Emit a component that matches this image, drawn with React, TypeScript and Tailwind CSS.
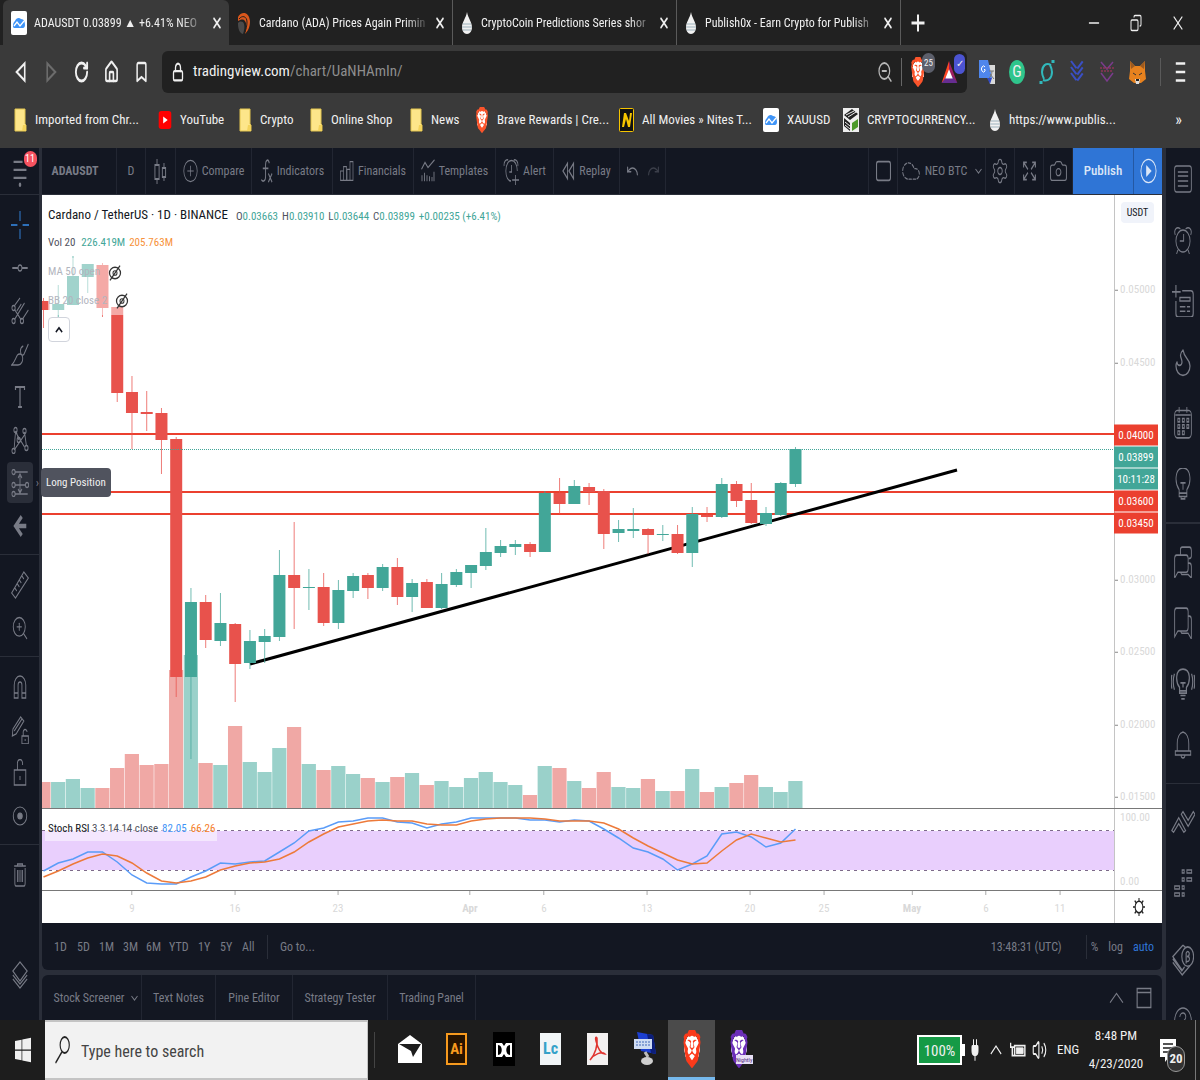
import type { CSSProperties, ReactNode } from "react";
import {
  Bell,
  BookmarkIcon,
  Camera,
  Cloud,
  Copy,
  Flame,
  House,
  Lock,
  LockOpen,
  Minus,
  Plug,
  Redo,
  RotateCw,
  Settings,
  Undo,
  Volume2,
  X,
  ZoomIn,
  ZoomOut,
} from "lucide-react";
import { SiBrave } from "react-icons/si";
import { FaWindows } from "react-icons/fa";

type Candle = [up: 0 | 1, high: number, top: number, bottom: number, low: number, volume: number];

const FIRST_X = 43.5;
const STEP = 14.745;

const candles: Candle[] = [
  [0, 298, 301, 310, 328, 782], [1, 285, 304, 310, 320, 782], [1, 256, 276, 305, 305, 779],
  [1, 264, 264, 277, 293, 788], [0, 263, 265, 308, 317, 788], [0, 307, 307, 393, 402, 768],
  [0, 376, 392, 413, 449, 754], [0, 391, 412, 414, 431, 765], [0, 408, 413, 440, 474, 764],
  [0, 437, 439, 677, 697, 670], [1, 588, 602, 677, 759, 655], [0, 595, 602, 640, 648, 763],
  [1, 593, 623, 641, 646, 765], [0, 623, 624, 664, 702, 726], [1, 630, 641, 663, 669, 762],
  [1, 629, 636, 642, 663, 772], [1, 550, 575, 637, 641, 748], [0, 522, 575, 588, 629, 727],
  [1, 569, 587, 588, 610, 764], [0, 573, 587, 623, 626, 770], [1, 580, 590, 623, 629, 766],
  [1, 573, 576, 591, 598, 774], [0, 573, 575, 588, 599, 778], [1, 564, 567, 588, 591, 782],
  [0, 558, 567, 597, 605, 777], [1, 579, 583, 597, 612, 773], [0, 579, 582, 608, 608, 785],
  [1, 573, 584, 608, 609, 781], [1, 569, 572, 585, 587, 787], [1, 565, 565, 573, 588, 778],
  [1, 528, 552, 566, 570, 772], [1, 540, 546, 553, 557, 782], [1, 540, 544, 547, 555, 785],
  [0, 542, 544, 552, 557, 795], [1, 491, 493, 552, 552, 766], [0, 478, 493, 504, 514, 768],
  [1, 480, 486, 504, 504, 781], [0, 483, 487, 492, 505, 788], [0, 489, 491, 534, 549, 772],
  [1, 520, 529, 533, 542, 787], [1, 508, 529, 531, 538, 788], [0, 528, 529, 535, 554, 779],
  [1, 525, 534, 535, 541, 791], [0, 525, 534, 553, 554, 791], [1, 507, 514, 553, 567, 769],
  [0, 507, 515, 517, 522, 792], [1, 478, 484, 517, 518, 787], [0, 481, 484, 501, 507, 783],
  [0, 483, 500, 523, 524, 775], [1, 507, 513, 524, 526, 787], [1, 482, 483, 515, 516, 792],
  [1, 447, 449, 484, 487, 781],
];

const stochK = [
  871, 863, 859, 852, 852, 862, 875, 883, 884, 884, 877, 871, 863, 864, 862, 861, 852, 843, 831, 828, 822, 821, 818,
  818, 822, 823, 828, 824, 822, 818, 818, 818, 818, 820, 820, 822, 820, 821, 829, 838, 848, 852, 859, 870, 864, 856,
  834, 832, 837, 847, 843, 829,
];
const stochD = [
  877, 871, 864, 858, 854, 856, 863, 873, 881, 883, 881, 877, 870, 866, 863, 862, 859, 852, 842, 834, 827, 824, 821,
  820, 821, 821, 824, 825, 825, 821, 819, 818, 818, 818, 819, 821, 821, 821, 823, 829, 838, 846, 853, 860, 864, 863,
  851, 840, 834, 838, 842, 840,
];

const toPoints = (ys: number[]) => ys.map((y, i) => `${FIRST_X + i * STEP},${y}`).join(" ");
const priceTop = (y: number): CSSProperties => ({ top: `${((y - 195) / 613) * 100}%` });
const timeLeft = (x: number): CSSProperties => ({ left: `${((x - 42) / 1072) * 100}%` });

const squash = { preserveAspectRatio: "none", strokeWidth: 1.2 } as const;

/* ---------- shared bits ---------- */

function Glyph({ children, className = "w-[18px] h-7" }: { children: ReactNode; className?: string }) {
  return (
    <svg
      viewBox="0 0 28 28"
      preserveAspectRatio="none"
      fill="none"
      stroke="currentColor"
      strokeWidth={1.4}
      className={`${className} shrink-0`}
      aria-hidden="true"
    >
      {children}
    </svg>
  );
}

function BraveIcon({ className }: { className: string }) {
  return (
    <span className="inline-flex shrink-0 bg-[radial-gradient(closest-side,white_75%,transparent_78%)]">
      <SiBrave preserveAspectRatio="none" className={className} aria-hidden="true" />
    </span>
  );
}

function TvIcon() {
  return (
    <svg viewBox="0 0 16 24" className="h-6 w-4 shrink-0" aria-hidden="true">
      <rect width="16" height="24" rx="2" fill="#fff" />
      <path d="M2 15c0-3 1-4 2-5 1-3 4-4 6-2 3 0 4 3 4 6 0 2-1 3-2 3H4c-1 0-2 0-2-2z" fill="#3f94f7" />
      <path d="M3 15l3-4 3 4 4-5" fill="none" stroke="#fff" strokeWidth="1.3" />
    </svg>
  );
}

function DropIcon() {
  return (
    <svg viewBox="0 0 12 24" className="h-6 w-3 shrink-0" aria-hidden="true">
      <path d="M6 1c1 6 5 10 5 15 0 4-2 7-5 7s-5-3-5-7C1 11 5 7 6 1z" fill="#f1f1f1" />
      <path d="M2 13h8M1 16h10M2 19h8" stroke="#9db2bd" />
    </svg>
  );
}

function FolderIcon() {
  return (
    <svg viewBox="0 0 13 24" className="h-6 w-[13px] shrink-0" aria-hidden="true">
      <path d="M1 1h10v15l1 1v6H1z" fill="#fde68a" stroke="#e2c44f" />
      <path d="M9 17h3v6H8z" fill="#f3d35b" />
    </svg>
  );
}

/* ---------- browser ---------- */

const tabs = [
  {
    title: "Cardano (ADA) Prices Again Primin",
    icon: (
      <svg viewBox="0 0 14 24" className="h-6 w-3.5 shrink-0" aria-hidden="true">
        <path d="M1 6c3-6 11-6 12 4 0 6-2 10-5 13 2-6 2-12-1-14-2-1-4 0-6 1z" fill="#d9571c" />
        <path d="M1 12c2-2 5-2 6 1s0 7-1 10c-4-1-5-6-5-11z" fill="#4a4a4a" />
        <path d="M2 8c3-4 8-3 8 3 0 4-1 7-2 10" fill="none" stroke="#212121" />
      </svg>
    ),
  },
  { title: "CryptoCoin Predictions Series shor", icon: <DropIcon /> },
  { title: "Publish0x - Earn Crypto for Publish", icon: <DropIcon /> },
];

function TabStrip() {
  return (
    <div className="flex h-[45px] shrink-0 items-stretch bg-[#212121] pl-[3px] text-[12px] text-[#f0f0f0]">
      <div className="flex w-[226px] items-center rounded-t-md bg-[#3a3a3a] pr-1.5 pl-2">
        <TvIcon />
        <span className="ml-[7px] flex-1 whitespace-nowrap [mask-image:linear-gradient(to_right,black_86%,transparent)]">
          ADAUSDT 0.03899 ▲ +6.41% NEO
        </span>
        <button aria-label="Close tab" className="ml-1.5">
          <X {...squash} strokeWidth={3} className="h-[18px] w-3" />
        </button>
      </div>
      {tabs.map((tab) => (
        <div key={tab.title} className="flex w-[224px] items-center border-r border-[#5a5a5a] pr-1.5 pl-2">
          {tab.icon}
          <span className="ml-2 flex-1 whitespace-nowrap [mask-image:linear-gradient(to_right,black_86%,transparent)]">
            {tab.title}
          </span>
          <button aria-label="Close tab" className="ml-1">
            <X {...squash} strokeWidth={3} className="h-[18px] w-3" />
          </button>
        </div>
      ))}
      <button aria-label="New tab" className="ml-2.5">
        <Glyph className="h-5 w-3.5">
          <path d="M14 2v24M1 14h26" strokeWidth={4} />
        </Glyph>
      </button>
      <div className="ml-auto flex items-center gap-7 pr-3.5">
        <button aria-label="Minimize">
          <Minus {...squash} strokeWidth={1.5} className="h-6 w-4" />
        </button>
        <button aria-label="Restore">
          <Copy {...squash} strokeWidth={2} className="h-[18px] w-3 -scale-x-100" />
        </button>
        <button aria-label="Close window">
          <X {...squash} strokeWidth={1.5} className="h-6 w-4" />
        </button>
      </div>
    </div>
  );
}

function AddressBar() {
  return (
    <div className="flex h-[53px] shrink-0 items-center bg-[#3a3a3a] text-[#f0f0f0]">
      <div className="flex w-[162px] items-center gap-[15px] pl-3.5">
        <button aria-label="Back">
          <Glyph className="h-6 w-[15px]">
            <path d="M20 4v20L5 14z" strokeWidth={3} />
          </Glyph>
        </button>
        <button aria-label="Forward" className="text-[#6c6c6c]">
          <Glyph className="h-6 w-[15px]">
            <path d="M6 4v20l15-10z" strokeWidth={3} />
          </Glyph>
        </button>
        <button aria-label="Reload">
          <RotateCw {...squash} strokeWidth={3} className="h-6 w-[15px]" />
        </button>
        <button aria-label="Home">
          <House {...squash} strokeWidth={2.6} className="h-6 w-[15px]" />
        </button>
        <button aria-label="Bookmark this page">
          <BookmarkIcon {...squash} strokeWidth={2.4} className="h-6 w-[15px]" />
        </button>
      </div>
      <div className="flex h-[42px] flex-1 items-center rounded-md bg-[#212121] pr-0.5 pl-2.5">
        <Lock {...squash} strokeWidth={2.6} className="h-5 w-3" aria-hidden="true" />
        <p className="ml-[9px] flex-1 text-[15px]">
          tradingview.com<span className="text-[#8e8e8e]">/chart/UaNHAmIn/</span>
        </p>
        <button aria-label="Zoom" className="text-[#b8b8b8]">
          <ZoomOut {...squash} strokeWidth={1.8} className="h-6 w-4" />
        </button>
        <span className="mx-2 h-7 w-px bg-[#666]" />
        <button aria-label="Brave Shields" className="relative flex w-[31px] items-center">
          <BraveIcon className="h-[30px] w-4 text-[#fb542b]" />
          <span className="absolute -top-1 left-3 rounded-full bg-[#5c5f6b] px-0.5 text-[9px] leading-[20px]">25</span>
        </button>
        <button aria-label="Brave Rewards" className="relative w-6">
          <svg viewBox="0 0 17 26" className="h-6 w-[17px]" aria-hidden="true">
            <path d="M8 1L0 25l8-7z" fill="#ff4724" />
            <path d="M8 1l9 24-9-10z" fill="#9e1f63" />
            <path d="M0 25h17l-5-7H5z" fill="#662d91" />
            <path d="M8 10l4 10H4z" fill="#fff" />
          </svg>
          <span className="absolute -top-1.5 right-0 w-[11px] rounded-full bg-[#4c54d2] text-[10px] leading-[20px]">✓</span>
        </button>
      </div>
      <div className="flex w-[233px] items-center gap-[14px] pl-3">
        <svg viewBox="0 0 16 26" className="h-[26px] w-4" aria-hidden="true">
          <path d="M6 6h10v19h-5z" fill="#d9d9d9" />
          <path d="M0 1h9l4 18H0z" fill="#4f86ec" />
          <path d="M8 19h5l-2 6z" fill="#3049c4" />
          <path d="M6 8a2 3 0 100 4V10.500H5" stroke="#fff" fill="none" />
          <path d="M10 12h5m-2 0c0 4-2 6-3 7m1-4l4 5" stroke="#777" fill="none" />
        </svg>
        <span className="flex h-6 w-4 items-center justify-center rounded-[50%] bg-[#2fc58c] text-[16px]">G</span>
        <svg viewBox="0 0 16 26" className="h-[26px] w-4" fill="none" stroke="#31b8bb" strokeWidth="2" aria-hidden="true">
          <path d="M12 6C7 3 3 7 3 13c0 3 1 5 2 7M4 21c5 2 9-2 9-8 0-3-1-5-2-7" />
          <path d="M14 1v3M2 22v3" strokeWidth="3" />
        </svg>
        <svg viewBox="0 0 16 26" className="h-[26px] w-4" fill="none" stroke="#3a4fc4" strokeWidth="2" aria-hidden="true">
          <path d="M2 2l6 8 6-8M2 8l6 8 6-8M2 14l6 8 6-8" strokeDasharray="9 1.500" />
        </svg>
        <svg viewBox="0 0 16 26" className="h-[26px] w-4" fill="none" stroke="#7a3c8c" strokeWidth="1.500" aria-hidden="true">
          <path d="M2 3l6 7 6-7M2 14l6 8 6-8" />
          <path d="M1 9h14M2 12h12" stroke="#8f3557" strokeDasharray="2 1" />
        </svg>
        <svg viewBox="0 0 17 26" className="h-[26px] w-[17px]" aria-hidden="true">
          <path d="M1 2l5 5h5l5-5v10l1 8-5 4H5l-5-4 1-8z" fill="#e8821e" />
          <path d="M1 2l5 5-4 3zM16 2l-5 5 4 3z" fill="#9c5a20" />
          <path d="M4 14l3 2M13 14l-3 2" stroke="#333" />
          <path d="M6 20h5l-1 5H7z" fill="#ddd" />
          <path d="M7 20h3v2H7z" fill="#222" />
        </svg>
        <span className="h-7 w-px bg-[#5a5a5a]" />
        <button aria-label="Menu">
          <Glyph className="h-6 w-[11px]">
            <path d="M2 4h24M2 14h24M2 24h24" strokeWidth={3} />
          </Glyph>
        </button>
      </div>
    </div>
  );
}

function Bookmark({ icon, label, width }: { icon: ReactNode; label: string; width: string }) {
  return (
    <a href="#" className={`flex shrink-0 items-center gap-2 whitespace-nowrap ${width}`}>
      {icon}
      {label}
    </a>
  );
}

function BookmarksBar() {
  return (
    <nav
      aria-label="Bookmarks"
      className="flex h-[50px] shrink-0 items-center overflow-hidden bg-[#3a3a3a] pr-[18px] pb-1.5 pl-3.5 text-[13px] text-[#f0f0f0]"
    >
      <Bookmark icon={<FolderIcon />} label="Imported from Chr..." width="w-36" />
      <Bookmark
        icon={
          <svg viewBox="0 0 14 20" className="h-[18px] w-3.5 shrink-0" aria-hidden="true">
            <rect width="14" height="20" rx="3" fill="#f00" />
            <path d="M5 6l5 4-5 4z" fill="#fff" />
          </svg>
        }
        label="YouTube"
        width="w-[81px]"
      />
      <Bookmark icon={<FolderIcon />} label="Crypto" width="w-[71px]" />
      <Bookmark icon={<FolderIcon />} label="Online Shop" width="w-[100px]" />
      <Bookmark icon={<FolderIcon />} label="News" width="w-[65px]" />
      <Bookmark icon={<BraveIcon className="h-[26px] w-3.5 text-[#fb542b]" />} label="Brave Rewards | Cre..." width="w-36" />
      <Bookmark
        icon={
          <svg viewBox="0 0 15 24" className="h-6 w-[15px] shrink-0" aria-hidden="true">
            <rect x="0.500" y="0.500" width="14" height="23" rx="1" fill="#111" stroke="#f5c400" />
            <path d="M3 19L5 5h2l3 8 1-8h2l-2 14H9L7 11 5 19z" fill="#f5c400" />
          </svg>
        }
        label="All Movies » Nites T..."
        width="w-36"
      />
      <Bookmark icon={<TvIcon />} label="XAUUSD" width="w-20" />
      <Bookmark
        icon={
          <svg viewBox="0 0 16 24" className="h-6 w-4 shrink-0" aria-hidden="true">
            <rect width="16" height="24" fill="#eee" />
            <path d="M1 7l8-6 6 5-8 6zM1 10l6 5v8l-6-5z" fill="#222" />
            <path d="M9 15l6-4v8l-6 4z" fill="#4c9a2a" />
            <path d="M3 7l8-4M5 9l8-5M2 14l5 4M2 17l5 4" stroke="#eee" />
          </svg>
        }
        label="CRYPTOCURRENCY..."
        width="w-[146px]"
      />
      <Bookmark icon={<DropIcon />} label="https://www.publis..." width="w-36" />
      <button aria-label="More bookmarks" className="ml-auto text-[16px]">
        »
      </button>
    </nav>
  );
}

/* ---------- TradingView: tool rails ---------- */

const drawTools: { name: string; art: ReactNode }[] = [
  { name: "Cross", art: <path d="M14 0v10M14 18v10M0 14h10M18 14h10" stroke="#2d6fb8" strokeWidth={1.8} /> },
  {
    name: "Trend line",
    art: (
      <>
        <path d="M2 14h9M17 14h9" strokeWidth={1.8} />
        <circle cx="14" cy="14" r="3" />
      </>
    ),
  },
  {
    name: "Pitchfork",
    art: (
      <>
        <path d="M5 9L14 1M6 13l10 10M6 22L21 6M18 22l9-9M9 14l7-7" />
        <circle cx="4" cy="11" r="2.500" />
        <circle cx="4" cy="24" r="2.500" />
        <circle cx="17" cy="24" r="2.500" />
      </>
    ),
  },
  { name: "Brush", art: <path d="M1 25h10c5 0 8-4 7-8-1-3-5-4-8-2-3 3-4 7-9 10zM15 12c0 4 5 4 6 1l6-9M15 12c-1-3 1-5 4-6" /> },
  { name: "Text", art: <path d="M7 7V4h14v3M14 4v20M11 24h6" strokeWidth={1.8} /> },
  {
    name: "Pattern",
    art: (
      <>
        <path d="M5 22L7 6l14 15M5 24l17-16M21 6l3 14M8 5l4 9" />
        <circle cx="7" cy="4" r="2.500" />
        <circle cx="21" cy="5" r="2.500" />
        <circle cx="4" cy="25" r="2.500" />
        <circle cx="24" cy="22" r="2.500" />
        <circle cx="12" cy="14" r="2.500" />
      </>
    ),
  },
  {
    name: "Long Position",
    art: (
      <>
        <path d="M6 3h20M6 25h20M6 16h17M14 7v16M11 9l3-4 3 4M11 20l3 4 3-4" />
        <circle cx="4" cy="3" r="2.500" />
        <circle cx="4" cy="16" r="2.500" />
        <circle cx="4" cy="25" r="2.500" />
        <circle cx="25" cy="16" r="2.500" />
      </>
    ),
  },
  { name: "Back", art: <path d="M25 14H7M17 3L6 14l11 11" strokeWidth={5} /> },
];

function ToolButton({ name, children }: { name: string; children: ReactNode }) {
  return (
    <button aria-label={name} className="flex h-[43px] w-full items-center justify-center">
      {children}
    </button>
  );
}

function LeftRail() {
  return (
    <aside className="flex w-10 shrink-0 flex-col border-r border-[#2a2e39] bg-[#131722] text-[#787b86]">
      <div className="flex h-[47px] shrink-0 items-center justify-center border-b border-[#2a2e39]">
        <button aria-label="Menu, 11 notifications" className="relative">
          <Glyph className="h-8 w-[18px]">
            <path d="M4 6h14M4 13h20M4 20h20" strokeWidth={2} />
            <circle cx="14" cy="26" r="2" fill="currentColor" stroke="none" />
          </Glyph>
          <span className="absolute -top-1 -right-2 w-[13px] rounded-full bg-[#f7525f] text-center text-[10px] leading-[16px] text-white">
            11
          </span>
        </button>
      </div>
      <div className="border-b border-[#2a2e39] pt-2 pb-[7px]">
        {drawTools.map((tool) =>
          tool.name === "Long Position" ? (
            <div key={tool.name} className="relative flex h-[43px] items-center justify-center">
              <button aria-label={tool.name} className="flex h-[41px] w-[26px] items-center justify-center rounded bg-[#2a2e39]">
                <Glyph>{tool.art}</Glyph>
              </button>
              <span className="absolute right-0 text-[12px]">›</span>
              <span
                role="tooltip"
                className="absolute left-[41px] z-10 rounded-sm bg-[#50535e] px-[5px] text-[11px] leading-[29px] whitespace-nowrap text-[#f0f0f0]"
              >
                Long Position
              </span>
            </div>
          ) : (
            <ToolButton key={tool.name} name={tool.name}>
              <Glyph className={tool.name === "Back" ? "w-4 h-6" : "w-[18px] h-7"}>{tool.art}</Glyph>
            </ToolButton>
          ),
        )}
      </div>
      <div className="border-b border-[#2a2e39] pt-2 pb-[7px]">
        <ToolButton name="Measure">
          <Glyph>
            <path d="M1 22L20 1l7 6L7 27zM6 17l3 3M10 13l3 3M13 9l3 3M17 5l3 3" />
          </Glyph>
        </ToolButton>
        <ToolButton name="Zoom in">
          <ZoomIn {...squash} className="h-7 w-[18px]" />
        </ToolButton>
      </div>
      <div className="border-b border-[#2a2e39] pt-2 pb-[7px]">
        <ToolButton name="Magnet">
          <Glyph>
            <path d="M5 25V12a9 9 0 0118 0v13h-6V12a3 3 0 00-6 0v13zM5 20h6M17 20h6" />
          </Glyph>
        </ToolButton>
        <ToolButton name="Stay in drawing mode">
          <Glyph>
            <path d="M2 20l1-7L15 1l5 4L8 18zM5 15L17 3M17 20h10v8H17zM19 20v-3a3 3 0 016-1M22 23v2" />
          </Glyph>
        </ToolButton>
        <ToolButton name="Lock all drawings">
          <Glyph>
            <path d="M5 11h18v15H5zM10 11V5a4 4 0 018-1v2M14 17v4" />
          </Glyph>
        </ToolButton>
        <ToolButton name="Hide all drawings">
          <Glyph className="h-6 w-[18px]">
            <circle cx="14" cy="14" r="10.500" />
            <circle cx="14" cy="14" r="3.500" fill="currentColor" />
          </Glyph>
        </ToolButton>
      </div>
      <div className="pt-2">
        <ToolButton name="Remove drawings">
          <Glyph>
            <path d="M5 5h18M10 5V3h8v2M6 7v15c0 3 1 3 3 3h10c2 0 3 0 3-3V7M10 9v12M12.500 9v12M15.500 9v12M18 9v12" />
          </Glyph>
        </ToolButton>
      </div>
      <div className="mt-auto pb-6">
        <ToolButton name="Object tree">
          <Glyph className="h-7 w-5">
            <path d="M14 1l10 9-10 10L4 10zM4 14l10 9 10-9M4 18l10 9 10-9" />
          </Glyph>
        </ToolButton>
      </div>
    </aside>
  );
}

function SideButton({ name, children }: { name: string; children: ReactNode }) {
  return (
    <button aria-label={name} className="flex h-[61px] w-full shrink-0 items-center justify-center">
      {children}
    </button>
  );
}

function RightRail() {
  return (
    <aside className="flex w-[34px] shrink-0 flex-col overflow-hidden bg-[#131722] text-[#787b86]">
      <div className="border-b-2 border-[#2a2e39] pb-2">
        <SideButton name="Watchlist">
          <Glyph>
            <rect x="1" y="1" width="26" height="26" rx="3" />
            <path d="M6 7h16M6 11h16M6 16h16M6 21h16" />
          </Glyph>
        </SideButton>
        <SideButton name="Alerts">
          <Glyph>
            <path d="M14 4a11 11 0 100 22 11 11 0 000-22zM15 8v7H9M2 9c-3-6 3-9 8-6M26 9c3-6-3-9-8-6M6 24l-2 4M22 24l2 4" />
          </Glyph>
        </SideButton>
        <SideButton name="Data window">
          <Glyph className="h-8 w-[22px]">
            <path d="M13 5h11q3 0 3 3v17q0 3-3 3H8q-3 0-3-3V14M5 0v11M0 6h11M10 11h13v3H10zM10 19h7M19 19h4M10 23h7M19 23h4" />
          </Glyph>
        </SideButton>
        <SideButton name="Hotlists">
          <Flame {...squash} className="h-8 w-6" />
        </SideButton>
        <SideButton name="Calendar">
          <Glyph className="h-8 w-[18px]">
            <rect x="1" y="3" width="26" height="24" rx="4" />
            <path d="M8 0v5M20 0v5M2 7h24" />
            <path d="M6 10h3v3H6zM13 10h3v3h-3zM20 10h3v3h-3zM6 15.500h3v3H6zM13 15.500h3v3h-3zM20 15.500h3v3h-3zM6 21h3v3H6zM13 21h3v3h-3z" />
          </Glyph>
        </SideButton>
        <SideButton name="My ideas">
          <Glyph className="h-8 w-[18px]">
            <path d="M14 0C2 0 0 12 8 19v3h12v-3c8-7 6-19-6-19zM8 22v3h12v-3M11 25v2h6v-2M14 19v-6M10 13h8" />
          </Glyph>
        </SideButton>
      </div>
      <div className="border-b border-[#2a2e39] pt-[7px] pb-2">
        <SideButton name="Public chats">
          <Glyph className="h-8 w-[18px]">
            <path d="M1 28V11q0-3 3-3h15q3 0 3 3v9q0 3-3 3H6zM10 8V3q0-2 3-2h11q3 0 3 3v5q0 2-4 2M22 15h2q3 0 3 3v10l-5-3H12l-2-2" />
          </Glyph>
        </SideButton>
        <SideButton name="Private chats">
          <Glyph className="h-8 w-[18px]">
            <path d="M1 26V4q0-3 3-3h15q3 0 3 3v14q0 3-3 3H6zM22 8h2q3 0 3 3v17l-5-5H12l-2-2" />
          </Glyph>
        </SideButton>
        <SideButton name="Ideas stream">
          <Glyph className="h-8 w-6">
            <path d="M14 1c-9 0-9 11-4 16v5h8v-5c5-5 5-16-4-16zM10 20h8M11 24h6M12 27h4M14 17v-4M11 13h6M4 5c-2 5-2 9 0 14M24 5c2 5 2 9 0 14M1 6c-1 4-1 8 0 12M27 6c1 4 1 8 0 12" />
          </Glyph>
        </SideButton>
        <SideButton name="Notifications">
          <Glyph>
            <path d="M14 1c-6 1-9 6-9 12v7h18v-7c0-6-3-11-9-12zM2 20h24v4H2zM11 24c0 4 6 4 6 0" />
          </Glyph>
        </SideButton>
      </div>
      <div className="pt-[7px]">
        <SideButton name="Order panel">
          <Glyph className="h-6 w-6">
            <path d="M1 24L9 9l8 15-2 2-6-10-6 10zM12 5l2-3 6 10 6-10 2 3-8 14z" />
          </Glyph>
        </SideButton>
        <SideButton name="Depth of market">
          <Glyph className="h-7 w-[19px]">
            <path d="M1 17h7v3H1zM1 24h7v3H1zM12 17h3v3h-3zM12 24h3v3h-3zM12 9h3v3h-3zM12 1h3v3h-3zM19 1h7v3h-7zM19 9h7v3h-7z" />
          </Glyph>
        </SideButton>
      </div>
      <div className="pt-4">
        <SideButton name="Object tree beta">
          <Glyph className="h-8 w-[22px]">
            <path d="M14 1L1 11l12 12 3-3M14 1l3 2M1 16l12 11 10-8M1 13l12 11" />
            <ellipse cx="20" cy="11" rx="7.500" ry="8.500" />
            <path d="M18 17V8q2-3 4 0 0 3-3 3 4 0 3 3-1 2-4 1" />
          </Glyph>
        </SideButton>
        <SideButton name="Help">
          <Glyph>
            <circle cx="14" cy="14" r="13" />
            <path d="M9 10c1-6 11-5 9 1-1 2-4 3-4 6" />
          </Glyph>
        </SideButton>
      </div>
    </aside>
  );
}

/* ---------- TradingView: top toolbar ---------- */

function BarItem({ width, label, children }: { width: string; label: string; children: ReactNode }) {
  return (
    <button
      aria-label={label}
      className={`flex shrink-0 items-center justify-center gap-1 border-r border-[#222632] whitespace-nowrap ${width}`}
    >
      {children}
    </button>
  );
}

function ChartToolbar() {
  return (
    <div className="flex h-[47px] shrink-0 border-b border-[#2a2e39] bg-[#131722] text-[12px] text-[#787b86]">
      <BarItem width="w-[75px] pr-2" label="Symbol">
        <span className="font-bold">ADAUSDT</span>
      </BarItem>
      <BarItem width="w-[29px]" label="Interval">
        D
      </BarItem>
      <BarItem width="w-[30px]" label="Bar style">
        <Glyph className="h-7 w-[13px]">
          <path d="M2 8h9v14H2zM6.500 2v6M6.500 22v5M18 11h7v9h-7zM21.500 6v5M21.500 20v4" strokeWidth={2} />
        </Glyph>
      </BarItem>
      <BarItem width="w-[76px]" label="Compare">
        <Glyph className="h-6 w-[15px]">
          <circle cx="14" cy="14" r="12.500" />
          <path d="M14 8v12M8 14h12" />
        </Glyph>
        Compare
      </BarItem>
      <BarItem width="w-[81px]" label="Indicators">
        <Glyph className="h-6 w-[13px]">
          <path d="M20 5c-2-6-8-4-8 2v13c0 6-6 7-9 4M6 11h12M18 17l8 10M26 17l-8 10" strokeWidth={2} />
        </Glyph>
        Indicators
      </BarItem>
      <BarItem width="w-[81px]" label="Financials">
        <Glyph className="h-6 w-3.5">
          <path d="M1 14h6v11H1zM7 9h6v16H7zM14 12h6v13h-6zM20 3h6v22h-6z" />
        </Glyph>
        Financials
      </BarItem>
      <BarItem width="w-[82px]" label="Templates">
        <Glyph className="h-6 w-3.5">
          <path d="M1 12l7-8 6 6L27 1M2 26v-7M7 26V16M12 26v-7M17 26v-6M22 26v-5M26 26V15" strokeWidth={1.8} />
        </Glyph>
        Templates
      </BarItem>
      <BarItem width="w-[58px]" label="Alert">
        <Glyph className="h-7 w-4">
          <path d="M25 14c0-14-20-14-20 0 0 6 4 10 9 10M15 8v7h-4M2 9c-1-4 3-7 7-6M26 9c1-4-3-7-7-6M22 18v10M16 23h12" />
        </Glyph>
        Alert
      </BarItem>
      <BarItem width="w-[66px]" label="Replay">
        <Glyph className="h-6 w-[13px]">
          <path d="M12 5v18L2 14zM25 5v18l-10-9z" strokeWidth={2} />
        </Glyph>
        Replay
      </BarItem>
      <BarItem width="w-[46px]" label="Undo or redo">
        <Undo {...squash} strokeWidth={2} className="h-[18px] w-[13px]" />
        <Redo {...squash} strokeWidth={2} className="ml-1 h-[18px] w-[13px] opacity-40" />
      </BarItem>
      <div className="ml-auto flex">
        <BarItem width="w-[30px] border-l" label="Layout">
          <Glyph className="h-6 w-[15px]">
            <rect x="1" y="3" width="26" height="22" rx="3" strokeWidth={2} />
          </Glyph>
        </BarItem>
        <BarItem width="w-[88px]" label="Chart layout name">
          <Cloud {...squash} strokeDasharray="3 2" className="h-7 w-5 shrink-0" />
          NEO BTC
          <Glyph className="ml-1 h-2 w-[7px]">
            <path d="M2 7l12 14L26 7" strokeWidth={4} />
          </Glyph>
        </BarItem>
        <BarItem width="w-[29px]" label="Settings">
          <Settings {...squash} className="h-7 w-[18px]" />
        </BarItem>
        <BarItem width="w-[29px]" label="Fullscreen">
          <Glyph className="h-6 w-[15px]">
            <path d="M3 10V4h6M3 4l8 8M19 4h6v6M25 4l-8 8M3 18v6h6M3 24l8-8M25 18v6h-6M25 24l-8-8" strokeWidth={2} />
          </Glyph>
        </BarItem>
        <BarItem width="w-[29px]" label="Snapshot">
          <Camera {...squash} className="h-7 w-[19px]" />
        </BarItem>
        <button className="w-[61px] border-r border-[#2458a3] bg-[#2f75d6] text-[13px] font-medium text-[#dbe6f7]">Publish</button>
        <button aria-label="Go live" className="flex w-7 items-center justify-center bg-[#2f75d6] text-[#dbe6f7]">
          <Glyph className="h-[26px] w-[17px]">
            <circle cx="14" cy="14" r="12.500" />
            <path d="M11 9l7 5-7 5z" fill="currentColor" />
          </Glyph>
        </button>
      </div>
    </div>
  );
}

/* ---------- TradingView: chart ---------- */

const axisPrices: [number, string][] = [
  [290, "0.05000"], [363, "0.04500"], [580, "0.03000"], [652, "0.02500"], [725, "0.02000"], [797, "0.01500"],
];

const priceTags: [number, string, string][] = [
  [435, "0.04000", "bg-[#eb402f]"],
  [457, "0.03899", "bg-[#42a698]"],
  [479, "10:11:28", "bg-[#42a698]"],
  [501, "0.03600", "bg-[#eb402f]"],
  [523, "0.03450", "bg-[#eb402f]"],
];

const axisDates: [number, string][] = [
  [132, "9"], [235, "16"], [338, "23"], [470, "Apr"], [544, "6"], [647, "13"], [750, "20"], [824, "25"], [912, "May"],
  [986, "6"], [1060, "11"],
];

function PricePlot() {
  return (
    <svg viewBox="42 195 1072 613" preserveAspectRatio="none" className="absolute inset-0 h-full w-full" aria-label="ADAUSDT daily candles">
      {candles.map(([up, , , , , volume], i) => (
        <rect
          key={i}
          x={FIRST_X + i * STEP - 7.2}
          y={volume}
          width={14.2}
          height={808 - volume}
          fill={up ? "#9ad1ca" : "#f0a8a5"}
        />
      ))}
      <path d="M42 434H1114M42 492H1114M42 514H1114" stroke="#eb402f" strokeWidth={2} />
      <path d="M250 664L957 470" stroke="#000" strokeWidth={3} />
      {candles.map(([up, high, top, bottom, low], i) => {
        const x = FIRST_X + i * STEP;
        const color = up ? "#42a698" : "#e8524c";
        return (
          <g key={i} fill={color}>
            <rect x={x - 0.5} y={high} width={1} height={low - high} opacity={0.75} />
            <rect x={x - 6} y={top} width={12} height={bottom - top} />
          </g>
        );
      })}
      <path d="M42 449.500H1114" stroke="#42a698" strokeDasharray="1 1" />
    </svg>
  );
}

function HiddenEye() {
  return (
    <Glyph className="h-4 w-3.5">
      <ellipse cx="14" cy="14" rx="11" ry="10" strokeWidth={2.5} stroke="#333" />
      <ellipse cx="14" cy="14" rx="4" ry="4" strokeWidth={2} stroke="#333" />
      <path d="M4 27L24 1" strokeWidth={2.5} stroke="#333" />
    </Glyph>
  );
}

const ohlc: [string, string][] = [["O", "0.03663"], ["H", "0.03910"], ["L", "0.03644"], ["C", "0.03899"]];

function Legend() {
  return (
    <div className="relative flex flex-col items-start pt-1.5 pl-1.5 text-[11px] whitespace-nowrap text-[#50535e]">
      <div className="flex h-7 items-center gap-2">
        <h1 className="text-[13px] text-[#131722]">Cardano / TetherUS · 1D · BINANCE</h1>
        <p className="flex gap-1 pt-1 text-[#42a698]">
          {ohlc.map(([key, value]) => (
            <span key={key}>
              <span className="text-[#50535e]">{key}</span>
              {value}
            </span>
          ))}
          <span>+0.00235 (+6.41%)</span>
        </p>
      </div>
      <p className="flex h-[29px] items-center gap-1">
        Vol 20 <span className="ml-0.5 text-[#42a698]">226.419M</span>
        <span className="text-[#f7923a]">205.763M</span>
      </p>
      <p className="flex h-[29px] items-center gap-2 bg-white/50 pr-2 text-[#b2b5be]">
        MA 50 open <HiddenEye />
      </p>
      <p className="flex h-7 items-center gap-2 bg-white/50 pr-2 text-[#b2b5be]">
        BB 20 close 2 <HiddenEye />
      </p>
      <button aria-label="Collapse legend" className="mt-0.5 flex h-[25px] w-[22px] items-center justify-center rounded-sm border border-[#d1d4dc] bg-white">
        <Glyph className="h-2.5 w-2">
          <path d="M3 20L14 8l11 12" strokeWidth={5} stroke="#131722" />
        </Glyph>
      </button>
    </div>
  );
}

function Chart() {
  return (
    <div className="flex min-h-0 flex-1 flex-col bg-white text-[11px]">
      <div className="flex min-h-0 flex-1">
        <div className="relative flex-1 overflow-hidden">
          <PricePlot />
          <Legend />
        </div>
        <div className="relative w-12 shrink-0 border-l border-[#c4c4c4] text-[#d9d9d9]">
          <button className="absolute top-[7px] left-1.5 h-[21px] w-[33px] rounded-sm bg-[#f0f3fa] text-[10px] text-[#131722]">USDT</button>
          {axisPrices.map(([y, label]) => (
            <span
              key={label}
              style={priceTop(y)}
              className="absolute left-0 flex -translate-y-1/2 items-center gap-0.5 before:h-px before:w-[3px] before:bg-[#888]"
            >
              {label}
            </span>
          ))}
          {priceTags.map(([y, label, color]) => (
            <span
              key={label}
              style={priceTop(y)}
              className={`absolute -left-px h-[21px] w-11 -translate-y-1/2 text-center leading-[21px] text-white ${color}`}
            >
              {label}
            </span>
          ))}
        </div>
      </div>
      <div className="flex h-[82px] shrink-0 border-t border-[#787878]">
        <div className="relative flex-1">
          <svg viewBox="42 809 1072 81" preserveAspectRatio="none" className="absolute inset-0 h-full w-full" fill="none" aria-label="Stochastic RSI">
            <rect x="42" y="831" width="1072" height="39" fill="#e9cffd" />
            <path d="M42 830.500H1114M42 870.500H1114" stroke="#7d6a8a" strokeDasharray="3 4" />
            <polyline points={toPoints(stochK)} stroke="#5a9cf8" strokeWidth={1.5} />
            <polyline points={toPoints(stochD)} stroke="#ed7a3a" strokeWidth={1.5} />
          </svg>
          <p className="relative mt-2 ml-[3px] flex h-6 w-fit items-center gap-1 bg-white/50 pr-0.5 pl-[3px] whitespace-nowrap text-[#50535e]">
            <span>
              <span className="text-[#131722]">Stoch RSI</span> 3 3 14 14 close
            </span>
            <span className="text-[#3f94f7]">82.05</span>
            <span className="text-[#f57c1f]">66.26</span>
          </p>
        </div>
        <div className="flex w-12 shrink-0 flex-col justify-between border-l border-[#c4c4c4] pt-px pl-[5px] text-[#d9d9d9]">
          <span>100.00</span>
          <span>0.00</span>
        </div>
      </div>
      <div className="flex h-[33px] shrink-0 border-t border-[#787878]">
        <div className="relative flex-1 text-[#d9d9d9]">
          {axisDates.map(([x, label]) => (
            <span
              key={x}
              style={timeLeft(x)}
              className="absolute top-0 flex -translate-x-1/2 flex-col items-center gap-1.5 before:h-1 before:w-px before:bg-[#aaa]"
            >
              {label.length === 3 ? <b>{label}</b> : label}
            </span>
          ))}
        </div>
        <button aria-label="Chart settings" className="flex w-12 shrink-0 items-center justify-center border-l border-[#c4c4c4] text-[#222]">
          <Glyph className="h-[18px] w-3">
            <circle cx="14" cy="14" r="9" strokeWidth={2.5} />
            <path d="M14 0v5M14 23v5M0 14h5M23 14h5M4 4l4 4M20 20l4 4M4 24l4-4M20 8l4-4" strokeWidth={2.5} />
          </Glyph>
        </button>
      </div>
    </div>
  );
}

const ranges: [string, string][] = [
  ["1D", "w-[23px]"], ["5D", "w-[22px]"], ["1M", "w-6"], ["3M", "w-[23px]"], ["6M", "w-[23px]"], ["YTD", "w-[29px]"],
  ["1Y", "w-[22px]"], ["5Y", "w-[22px]"], ["All", "w-[25px]"],
];

const panels: [string, string][] = [
  ["Text Notes", "w-[74px]"], ["Pine Editor", "w-[77px]"], ["Strategy Tester", "w-[95px]"], ["Trading Panel", "w-[88px]"],
];

function RangeBar() {
  return (
    <div className="flex h-[47px] shrink-0 items-center rounded-b-md bg-[#131722] pr-2 pl-3 text-[12px] whitespace-nowrap text-[#787b86]">
      {ranges.map(([label, width]) => (
        <button key={label} className={`text-left ${width}`}>
          {label}
        </button>
      ))}
      <span className="h-6 w-px bg-[#2a2e39]" />
      <button className="ml-3">Go to...</button>
      <span className="ml-auto">13:48:31 (UTC)</span>
      <span className="mr-1 ml-6 h-6 w-px bg-[#2a2e39]" />
      <button>%</button>
      <button className="ml-2.5">log</button>
      <button className="ml-2.5 text-[#2f75d6]">auto</button>
    </div>
  );
}

function PanelTabs() {
  return (
    <div className="mt-[5px] flex h-[45px] shrink-0 rounded-t-md bg-[#131722] text-[12px] whitespace-nowrap text-[#787b86]">
      <button className="flex w-[100px] items-center justify-center gap-1.5 border-r border-[#222632] pl-2">
        Stock Screener
        <Glyph className="h-2 w-[7px]">
          <path d="M2 7l12 14L26 7" strokeWidth={4} />
        </Glyph>
      </button>
      {panels.map(([label, width]) => (
        <button key={label} className={`border-r border-[#222632] ${width}`}>
          {label}
        </button>
      ))}
      <div className="ml-auto flex items-center gap-3 pr-2.5">
        <button aria-label="Open panel">
          <Glyph className="h-4 w-[15px]">
            <path d="M2 22L14 6l12 16" strokeWidth={2} />
          </Glyph>
        </button>
        <button aria-label="Maximize panel">
          <Glyph className="h-[22px] w-4">
            <path d="M2 2h24v24H2zM2 7h24" strokeWidth={2} />
          </Glyph>
        </button>
      </div>
    </div>
  );
}

/* ---------- Windows taskbar ---------- */

function TaskButton({ name, active, children }: { name: string; active?: boolean; children: ReactNode }) {
  return (
    <button
      aria-label={name}
      className={`flex w-[47px] shrink-0 items-center justify-center border-b-[3px] ${active ? "border-[#76b9ed] bg-[#4b4b4b]" : "border-transparent"}`}
    >
      {children}
    </button>
  );
}

function Taskbar() {
  return (
    <footer className="flex h-[60px] shrink-0 bg-[#1d1d1d] text-[#f0f0f0]">
      <button aria-label="Start" className="flex w-[45px] shrink-0 items-center justify-center">
        <FaWindows preserveAspectRatio="none" className="h-7 w-4" />
      </button>
      <label className="flex w-[323px] shrink-0 items-center gap-2.5 border-y-2 border-r border-[#c4c4c4] bg-[#f2f2f2] pl-2.5 text-[#222]">
        <Glyph className="h-7 w-4">
          <circle cx="17" cy="9" r="8" strokeWidth={2} />
          <path d="M12 16L1 27" strokeWidth={2} />
        </Glyph>
        <input
          aria-label="Search"
          placeholder="Type here to search"
          className="w-full bg-transparent pt-1 text-[16px] outline-none placeholder:text-[#444]"
        />
      </label>
      <span className="my-3 ml-1.5 w-px bg-[#444]" />
      <div className="flex pl-[11px]">
        <TaskButton name="Mail">
          <svg viewBox="0 0 24 30" className="h-[30px] w-6" aria-hidden="true">
            <path d="M0 10L12 1l12 9v19H0z" fill="#fff" />
            <path d="M1 10h22l-8 13-2-6z" fill="#1d1d1d" />
          </svg>
        </TaskButton>
        <TaskButton name="Illustrator">
          <span className="h-8 w-[21px] border-2 border-[#f79a1e] bg-[#261300] text-center text-[15px] leading-[28px] font-bold text-[#f79a1e]">
            Ai
          </span>
        </TaskButton>
        <TaskButton name="CapCut">
          <svg viewBox="0 0 22 34" className="h-[34px] w-[22px]" aria-hidden="true">
            <path d="M0 0h22v34H0z" fill="#000" />
            <path d="M3 11h16v14H3z" fill="#fff" />
            <path d="M5 13c5 0 5 10 0 10zM17 13c-5 0-5 10 0 10z" fill="#000" />
            <path d="M9 11h4l-2 3zM9 25h4l-2-3z" fill="#000" />
          </svg>
        </TaskButton>
        <TaskButton name="Lc">
          <span className="h-8 w-[21px] bg-[#f1f5f7] text-center text-[16px] leading-[32px] font-bold text-[#36a2c9]">Lc</span>
        </TaskButton>
        <TaskButton name="Acrobat Reader">
          <svg viewBox="0 0 21 32" className="h-8 w-[21px]" aria-hidden="true">
            <path d="M0 0h21v32H0z" fill="#f3f1f1" />
            <path d="M3 27C8 22 11 12 10 5c-1-2-2 0-1 3 2 8 5 13 9 13-3-3-11 0-15 6z" fill="none" stroke="#e0342f" strokeWidth="1.500" />
          </svg>
        </TaskButton>
        <TaskButton name="On-screen remote">
          <svg viewBox="0 0 24 34" className="h-[34px] w-6" aria-hidden="true">
            <path d="M4 0l16 3 3 19-15-3z" fill="#1c3fd1" />
            <path d="M14 2l6 1 3 19-5-1z" fill="#0c1e7a" />
            <path d="M1 7h18v10H1z" fill="#cfdcf3" />
            <path d="M3 10h14M3 13h14" stroke="#4066b8" strokeDasharray="2 1" />
            <path d="M12 20l3 5" stroke="#bbb" strokeWidth="3" />
            <ellipse cx="14" cy="29" rx="6" ry="4" fill="#cfcfcf" />
          </svg>
        </TaskButton>
        <TaskButton name="Brave" active>
          <BraveIcon className="h-[38px] w-5 text-[#fb3a1b]" />
        </TaskButton>
        <TaskButton name="Brave Nightly">
          <span className="relative flex">
            <BraveIcon className="h-[38px] w-5 text-[#6b2fb8]" />
            <span className="absolute -right-1 bottom-1 bg-[#e8e0f5] text-[6px] leading-[9px] text-[#53307f]">Nightly</span>
          </span>
        </TaskButton>
      </div>
      <div className="ml-auto flex items-center text-[13px]">
        <span className="h-[30px] w-[45px] border-2 border-white bg-[#159a46] text-center text-[15px] leading-[28px]">100%</span>
        <span className="h-3 w-[3px] bg-white" />
        <Plug preserveAspectRatio="none" fill="currentColor" className="ml-1 h-6 w-3" aria-hidden="true" />
        <Glyph className="ml-[9px] h-4 w-3">
          <path d="M2 21L14 7l12 14" strokeWidth={2.5} />
        </Glyph>
        <Glyph className="ml-2 h-5 w-4">
          <path d="M8 8h18v14H8zM1 4v6h6M4 10v12h5" strokeWidth={2.5} />
          <path d="M11 11h12v8H11z" fill="currentColor" />
        </Glyph>
        <Volume2 {...squash} strokeWidth={1.8} className="ml-1.5 h-6 w-[15px]" aria-hidden="true" />
        <span className="ml-2.5 w-[23px]">ENG</span>
        <p className="ml-2 w-[56px] text-center leading-[28px] whitespace-nowrap">
          8:48 PM
          <br />
          4/23/2020
        </p>
        <button aria-label="20 notifications" className="relative mr-2.5 ml-4 h-11 w-[25px]">
          <svg viewBox="0 0 16 24" className="h-6 w-4" aria-hidden="true">
            <path d="M0 1h16v18h-7l-4 5v-5H0z" fill="#fff" />
            <path d="M3 6h10M3 10h10M3 14h7" stroke="#1d1d1d" strokeWidth="1.500" />
          </svg>
          <span className="absolute right-0 bottom-0 w-[18px] rounded-full border border-[#999] bg-[#333] text-[13px] leading-[24px] font-bold">
            20
          </span>
        </button>
        <span className="h-full w-px bg-[#777]" />
        <span className="w-1" />
      </div>
    </footer>
  );
}

export default function App() {
  return (
    <div className="flex h-screen min-h-[900px] w-full flex-col overflow-hidden font-['Roboto_Condensed','Liberation_Sans',sans-serif]">
      <TabStrip />
      <AddressBar />
      <BookmarksBar />
      <main className="flex min-h-0 flex-1 bg-[#2a2e39]">
        <LeftRail />
        <section className="mr-1 ml-0.5 flex min-w-0 flex-1 flex-col">
          <ChartToolbar />
          <Chart />
          <RangeBar />
          <PanelTabs />
        </section>
        <RightRail />
      </main>
      <Taskbar />
    </div>
  );
}
